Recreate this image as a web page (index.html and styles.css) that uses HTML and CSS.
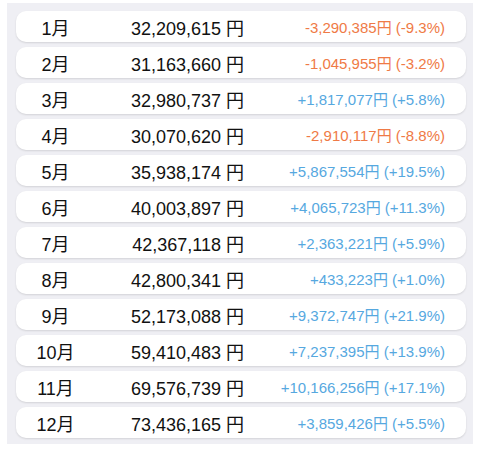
FILE: index.html
```html
<!DOCTYPE html>
<html lang="ja">
<head>
<meta charset="utf-8">
<link rel="stylesheet" href="styles.css">
</head>
<body>
<div class="panel">
  <div class="row"><span class="month">1月</span><span class="amount">32,209,615 円</span><span class="change down">-3,290,385円 (-9.3%)</span></div>
  <div class="row"><span class="month">2月</span><span class="amount">31,163,660 円</span><span class="change down">-1,045,955円 (-3.2%)</span></div>
  <div class="row"><span class="month">3月</span><span class="amount">32,980,737 円</span><span class="change up">+1,817,077円 (+5.8%)</span></div>
  <div class="row"><span class="month">4月</span><span class="amount">30,070,620 円</span><span class="change down">-2,910,117円 (-8.8%)</span></div>
  <div class="row"><span class="month">5月</span><span class="amount">35,938,174 円</span><span class="change up">+5,867,554円 (+19.5%)</span></div>
  <div class="row"><span class="month">6月</span><span class="amount">40,003,897 円</span><span class="change up">+4,065,723円 (+11.3%)</span></div>
  <div class="row"><span class="month">7月</span><span class="amount">42,367,118 円</span><span class="change up">+2,363,221円 (+5.9%)</span></div>
  <div class="row"><span class="month">8月</span><span class="amount">42,800,341 円</span><span class="change up">+433,223円 (+1.0%)</span></div>
  <div class="row"><span class="month">9月</span><span class="amount">52,173,088 円</span><span class="change up">+9,372,747円 (+21.9%)</span></div>
  <div class="row"><span class="month">10月</span><span class="amount">59,410,483 円</span><span class="change up">+7,237,395円 (+13.9%)</span></div>
  <div class="row"><span class="month">11月</span><span class="amount">69,576,739 円</span><span class="change up">+10,166,256円 (+17.1%)</span></div>
  <div class="row"><span class="month">12月</span><span class="amount">73,436,165 円</span><span class="change up">+3,859,426円 (+5.5%)</span></div>
</div>
</body>
</html>
```

FILE: styles.css
```css
html, body {
  margin: 0;
  padding: 0;
  background: #ffffff;
}
body {
  font-family: "Liberation Sans", "Noto Sans CJK JP", sans-serif;
  color: #111;
}
.panel {
  margin: 3px 7px 0 7px;
  width: 466px;
  box-sizing: border-box;
  background: #efeff4;
  padding: 8px 7px 6px 9px;
  display: flex;
  flex-direction: column;
  gap: 5px;
}
.row {
  height: 31px;
  background: #ffffff;
  border-radius: 10px;
  box-shadow: 0 1px 2px rgba(0, 0, 0, 0.12);
  display: grid;
  grid-template-columns: 79px 149px 1fr;
  align-items: center;
  padding-right: 21px;
}
.month {
  font-size: 18px;
  text-align: center;
}
.amount {
  font-size: 18px;
  text-align: right;
}
.change {
  font-size: 15px;
  text-align: right;
}
.down { color: #ef7a46; }
.up { color: #56a8df; }
```
